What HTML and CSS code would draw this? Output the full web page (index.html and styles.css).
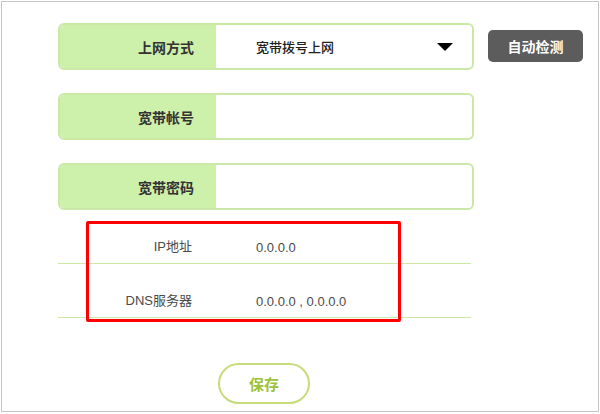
FILE: index.html
```html
<!DOCTYPE html>
<html lang="zh-CN">
<head>
<meta charset="utf-8">
<link rel="stylesheet" href="styles.css">
</head>
<body>
<div class="frame">
  <div class="form">
    <div class="line">
      <div class="field">
        <div class="label">上网方式</div>
        <div class="value">宽带拨号上网<span class="arrow"></span></div>
      </div>
      <button class="detect">自动检测</button>
    </div>
    <div class="line">
      <div class="field">
        <div class="label">宽带帐号</div>
        <div class="value"></div>
      </div>
    </div>
    <div class="line">
      <div class="field">
        <div class="label">宽带密码</div>
        <div class="value"></div>
      </div>
    </div>
    <div class="info">
      <div class="info-label">IP地址</div>
      <div class="info-value">0.0.0.0</div>
    </div>
    <div class="info">
      <div class="info-label">DNS服务器</div>
      <div class="info-value">0.0.0.0 , 0.0.0.0</div>
    </div>
    <button class="save">保存</button>
  </div>
  <div class="highlight"></div>
</div>
</body>
</html>
```
FILE: styles.css
```css
* { box-sizing: border-box; }
html, body { margin: 0; padding: 0; background: #fff; }
body {
  font-family: "Liberation Sans", "Noto Sans CJK SC", sans-serif;
  color: #333;
}
.frame {
  position: relative;
  margin: 1px 0 0 1px;
  width: 598px;
  height: 411px;
  border: 1px solid #c4c4c4;
  padding: 21px 0 0 56px;
}
.form {
  display: flex;
  flex-direction: column;
  width: 530px;
}
.line {
  display: flex;
  align-items: flex-start;
  gap: 14px;
  margin-bottom: 23px;
}
.field {
  display: flex;
  width: 416px;
  height: 47px;
  border: 2px solid #cbe8a6;
  border-radius: 6px;
  overflow: hidden;
  background: #fff;
}
.label {
  width: 156px;
  background: #cdf1ab;
  display: flex;
  align-items: center;
  justify-content: flex-end;
  padding-right: 22px;
  font-family: "Noto Sans CJK SC", sans-serif;
  font-weight: bold;
  font-size: 14px;
  color: #333;
}
.value {
  flex: 1;
  display: flex;
  align-items: center;
  padding: 0 19px 0 40px;
  font-family: "Noto Sans CJK SC", sans-serif;
  font-size: 13px;
  font-weight: 500;
  color: #222;
}
.arrow {
  margin-left: auto;
  width: 0;
  height: 0;
  border-left: 8px solid transparent;
  border-right: 8px solid transparent;
  border-top: 8px solid #000;
}
.detect {
  margin-top: 7px;
  width: 95px;
  height: 32px;
  border: none;
  border-radius: 5px;
  background: #5c5c5c;
  color: #fff;
  font-family: "Noto Sans CJK SC", sans-serif;
  font-weight: bold;
  font-size: 14px;
  padding: 0;
}
.line:nth-child(3) { margin-bottom: 0; }
.info {
  display: flex;
  align-items: flex-end;
  width: 413px;
  height: 54px;
  padding-bottom: 8px;
  border-bottom: 1px solid #cde7a6;
  font-size: 13px;
  color: #4a4a4a;
}
.info-label {
  width: 134px;
  text-align: right;
  font-family: "Liberation Sans", "Noto Sans CJK SC", sans-serif;
}
.info-value {
  padding-left: 64px;
  font-family: "Liberation Sans", sans-serif;
}
.save {
  margin: 45px 0 0 160px;
  width: 92px;
  height: 41px;
  border: 2px solid #c5dc79;
  border-radius: 21px;
  background: #fff;
  color: #9cc23a;
  font-family: "Noto Sans CJK SC", sans-serif;
  font-weight: bold;
  font-size: 15px;
  padding: 0;
}
.highlight {
  position: absolute;
  left: 84px;
  top: 219px;
  width: 315px;
  height: 101px;
  border: 3px solid #ff0000;
  border-radius: 2px;
}
```
